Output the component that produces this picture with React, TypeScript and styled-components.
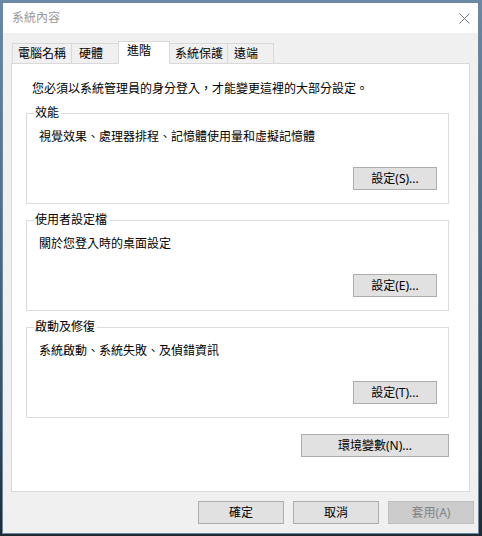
import React from "react";
import styled, { createGlobalStyle } from "styled-components";

const Global = createGlobalStyle`
  html, body {
    margin: 0;
    padding: 0;
  }
  body {
    width: 482px;
    height: 536px;
    overflow: hidden;
    background: linear-gradient(180deg, #6a89a6 0%, #4d6a85 45%, #34495c 80%, #1e2a34 100%);
    font-family: "Noto Sans", "Noto Sans CJK TC", sans-serif;
    font-size: 12px;
    color: #000;
  }
  * { box-sizing: border-box; }
`;

const Window = styled.div`
  margin: 2px 0 0 2px;
  width: 477px;
  border: 1px solid #6f879e;
  background: #f0f0f0;
  display: flex;
  flex-direction: column;
`;

const TitleBar = styled.div`
  height: 30px;
  background: #fff;
  display: flex;
  align-items: center;
  justify-content: space-between;
  padding: 0 8px 0 9px;
`;

const Title = styled.span`
  color: #9a9a9a;
  font-size: 12px;
  line-height: 16px;
`;

const Close = styled.svg`
  width: 11px;
  height: 11px;
  display: block;
`;

const Body = styled.div`
  padding: 8px 4px 9px 8px;
  display: flex;
  flex-direction: column;
`;

const TabStrip = styled.div`
  display: flex;
  align-items: flex-end;
  height: 22px;
  padding-left: 1px;
`;

const Tab = styled.div<{ $w: number; $pl: number; $active?: boolean }>`
  width: ${(p) => p.$w}px;
  height: ${(p) => (p.$active ? 23 : 20)}px;
  margin-bottom: ${(p) => (p.$active ? -1 : 0)}px;
  margin-left: -1px;
  &:first-child { margin-left: 0; }
  border: 1px solid #d9d9d9;
  border-bottom: none;
  background: ${(p) => (p.$active ? "#fff" : "#f0f0f0")};
  position: relative;
  z-index: ${(p) => (p.$active ? 2 : 1)};
  padding: ${(p) => (p.$active ? 1 : 2)}px 0 0 ${(p) => p.$pl}px;
  line-height: 16px;
  white-space: nowrap;
`;

const Panel = styled.div`
  background: #fff;
  border: 1px solid #d9d9d9;
  margin-right: 4px;
  padding: 17px 20px 34px 14px;
  display: flex;
  flex-direction: column;
`;

const Intro = styled.div`
  padding-left: 6px;
  line-height: 16px;
  margin-bottom: 8px;
  white-space: nowrap;
`;

const Group = styled.fieldset`
  margin: 0;
  min-width: 0;
  border: 1px solid #dcdcdc;
  padding: 8px 11px 13px 0;
  display: flex;
  flex-direction: column;
  & + & { margin-top: 8px; }
`;

const Legend = styled.legend`
  margin-left: 7px;
  padding: 0 2px 0 1px;
  line-height: 16px;
`;

const Desc = styled.div`
  margin-left: 12px;
  line-height: 16px;
  white-space: nowrap;
`;

const ButtonRow = styled.div<{ $mt: number; $gap?: number }>`
  display: flex;
  justify-content: flex-end;
  gap: ${(p) => p.$gap ?? 0}px;
  margin-top: ${(p) => p.$mt}px;
`;

const Button = styled.button<{ $w: number }>`
  width: ${(p) => p.$w}px;
  height: 23px;
  margin: 0;
  padding: 0;
  background: #e1e1e1;
  border: 1px solid #adadad;
  border-radius: 0;
  font-family: "Noto Sans", "Noto Sans CJK TC", sans-serif;
  font-size: 12px;
  line-height: 16px;
  color: #000;
  &:disabled {
    background: #cccccc;
    border-color: #bfbfbf;
    color: #838383;
  }
`;

const groups = [
  { title: "效能", desc: "視覺效果、處理器排程、記憶體使用量和虛擬記憶體", btn: "設定(S)..." },
  { title: "使用者設定檔", desc: "關於您登入時的桌面設定", btn: "設定(E)..." },
  { title: "啟動及修復", desc: "系統啟動、系統失敗、及偵錯資訊", btn: "設定(T)..." },
];

const tabs = [
  { label: "電腦名稱", w: 60, pl: 5 },
  { label: "硬體", w: 48, pl: 7 },
  { label: "進階", w: 52, pl: 8, active: true },
  { label: "系統保護", w: 59, pl: 5 },
  { label: "遠端", w: 47, pl: 6 },
];

export default function App() {
  return (
    <>
      <Global />
      <Window>
        <TitleBar>
          <Title>系統內容</Title>
          <Close viewBox="0 0 11 11">
            <path d="M0.5 0.5 L10.5 10.5 M10.5 0.5 L0.5 10.5" stroke="#7a7a7a" strokeWidth="1" fill="none" />
          </Close>
        </TitleBar>
        <Body>
          <TabStrip>
            {tabs.map((t) => (
              <Tab key={t.label} $w={t.w} $pl={t.pl} $active={t.active}>
                {t.label}
              </Tab>
            ))}
          </TabStrip>
          <Panel>
            <Intro>您必須以系統管理員的身分登入，才能變更這裡的大部分設定。</Intro>
            {groups.map((g) => (
              <Group key={g.title}>
                <Legend>{g.title}</Legend>
                <Desc>{g.desc}</Desc>
                <ButtonRow $mt={22}>
                  <Button $w={84}>{g.btn}</Button>
                </ButtonRow>
              </Group>
            ))}
            <ButtonRow $mt={16}>
              <Button $w={148}>環境變數(N)...</Button>
            </ButtonRow>
          </Panel>
          <ButtonRow $mt={9} $gap={9}>
            <Button $w={86}>確定</Button>
            <Button $w={86}>取消</Button>
            <Button $w={86} disabled>套用(A)</Button>
          </ButtonRow>
        </Body>
      </Window>
    </>
  );
}
